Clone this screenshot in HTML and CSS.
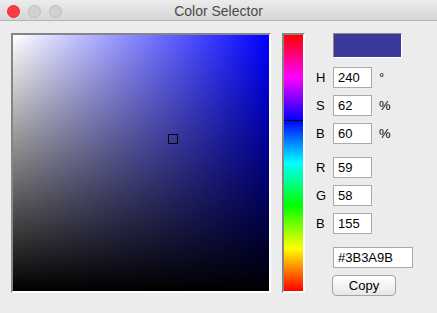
FILE: index.html
```html
<!DOCTYPE html>
<html lang="en">
<head>
    <meta charset="UTF-8">
    <title>Color Selector</title>
    <link rel="stylesheet" href="styles.css">
</head>
<body>
    <div class="window">
        <div class="titlebar">
            <div class="lights">
                <span class="light close"></span>
                <span class="light"></span>
                <span class="light"></span>
            </div>
            <div class="title">Color Selector</div>
        </div>

        <div class="content">
            <div class="sv-box">
                <div class="sv-field">
                    <div class="sv-marker"></div>
                </div>
            </div>

            <div class="hue-box">
                <div class="hue-bar">
                    <div class="hue-marker"></div>
                </div>
            </div>

            <div class="panel">
                <div class="swatch"></div>

                <div class="group first">
                    <div class="row"><span class="label">H</span><span class="field">240</span><span class="unit">°</span></div>
                    <div class="row"><span class="label">S</span><span class="field">62</span><span class="unit">%</span></div>
                    <div class="row"><span class="label">B</span><span class="field">60</span><span class="unit">%</span></div>
                </div>

                <div class="group">
                    <div class="row"><span class="label">R</span><span class="field">59</span></div>
                    <div class="row"><span class="label">G</span><span class="field">58</span></div>
                    <div class="row"><span class="label">B</span><span class="field">155</span></div>
                </div>

                <div class="group">
                    <div class="row"><span class="label"></span><span class="field hex">#3B3A9B</span></div>
                    <div class="row"><span class="label"></span><button class="copy">Copy</button></div>
                </div>
            </div>
        </div>
    </div>
</body>
</html>
```

FILE: styles.css
```css
html, body {
    margin: 0;
    padding: 0;
}

body {
    font-family: 'Liberation Sans', Arial, sans-serif;
    font-size: 13px;
    color: #000;
    background-color: #ececec;
}

.window {
    width: 437px;
    height: 313px;
    background-color: #ececec;
    overflow: hidden;
}

/* title bar */
.titlebar {
    position: relative;
    height: 20px;
    border-bottom: 1px solid #b4b4b4;
    background: linear-gradient(#ececec, #d6d6d6);
}

.lights {
    display: flex;
    gap: 8px;
    padding: 5px 0 0 7px;
}

.light {
    width: 11px;
    height: 11px;
    border-radius: 50%;
    background-color: #d1d1d1;
    border: 0.5px solid #bdbdbd;
}

.light.close {
    background-color: #fc3b44;
    border-color: #e0303a;
}

.title {
    position: absolute;
    left: 0;
    right: 0;
    top: 3px;
    text-align: center;
    font-size: 14px;
    color: #4a4a4a;
}

/* main area */
.content {
    display: flex;
    align-items: flex-start;
    padding: 12px 0 0 11px;
}

.sv-box {
    border: 2px solid;
    border-color: #858585 #fff #fff #858585;
}

.sv-field {
    position: relative;
    width: 256px;
    height: 256px;
    background:
        linear-gradient(to bottom, rgba(0,0,0,0), #000),
        linear-gradient(to right, #fff, #0000ff);
}

.sv-marker {
    position: absolute;
    left: 155px;
    top: 99px;
    width: 8px;
    height: 8px;
    border: 1px solid #000;
}

.hue-box {
    margin-left: 11px;
    border: 2px solid;
    border-color: #858585 #fff #fff #858585;
}

.hue-bar {
    position: relative;
    width: 19px;
    height: 256px;
    background: linear-gradient(to bottom, #f00, #f0f, #00f, #0ff, #0f0, #ff0, #f00);
}

.hue-marker {
    position: absolute;
    left: 0;
    right: 0;
    top: 85px;
    height: 1px;
    background-color: #000;
}

/* value panel */
.panel {
    margin-left: 10px;
    display: flex;
    flex-direction: column;
}

.swatch {
    margin-left: 18px;
    width: 67px;
    height: 23px;
    background-color: #3b3a9b;
    border: 1px solid;
    border-color: #8c8c8c #fff #fff #8c8c8c;
}

.group {
    display: flex;
    flex-direction: column;
    gap: 7px;
    margin-top: 13px;
}

.group.first {
    margin-top: 9px;
}

.row {
    display: flex;
    align-items: center;
    height: 21px;
}

.label {
    width: 18px;
    padding-left: 1px;
    box-sizing: border-box;
}

.field {
    box-sizing: border-box;
    width: 39px;
    height: 21px;
    line-height: 19px;
    padding-left: 4px;
    background-color: #fff;
    border: 1px solid #aaaaaa;
}

.field.hex {
    width: 80px;
}

.unit {
    margin-left: 7px;
}

.copy {
    box-sizing: border-box;
    margin-left: -1px;
    width: 64px;
    height: 21px;
    padding: 0;
    font-family: inherit;
    font-size: 13px;
    color: #000;
    border: 1px solid #a3a3a3;
    border-radius: 4px;
    background: linear-gradient(#ffffff, #f1f1f1 60%, #e6e6e6);
}
```
